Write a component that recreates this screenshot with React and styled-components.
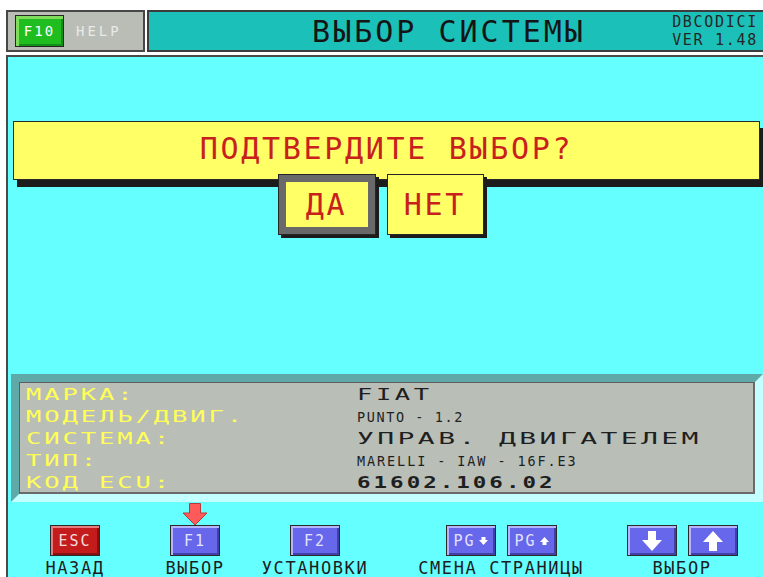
import { Fragment } from "react";
import styled, { createGlobalStyle } from "styled-components";

const GlobalStyle = createGlobalStyle`
  html, body {
    margin: 0;
    padding: 0;
    background: #ffffff;
    overflow: hidden;
  }
  body {
    font-family: "DejaVu Sans Mono", "Liberation Mono", monospace;
  }
`;

const Screen = styled.div`
  width: 763px;
  height: 577px;
  box-sizing: border-box;
  padding: 10px 0 0 6px;
  display: flex;
  flex-direction: column;
  gap: 3px;
  overflow: hidden;
`;

const TopBar = styled.div`
  display: flex;
  gap: 2px;
  height: 42px;
  flex-shrink: 0;
`;

const HelpBox = styled.div`
  width: 139px;
  box-sizing: border-box;
  border: 2px solid #474747;
  background: #b9bdb5;
  display: flex;
  align-items: center;
  gap: 12px;
  padding-left: 7px;
`;

const HelpKey = styled.div`
  width: 49px;
  height: 32px;
  box-sizing: border-box;
  border: 1px solid #262626;
  background: #1fbd1f;
  box-shadow: inset 3px 3px 0 #7fdc5c, inset -2px -2px 0 #14901a;
  color: #ffffff;
  font-size: 14px;
  letter-spacing: 2px;
  display: flex;
  align-items: center;
  justify-content: center;
`;

const HelpLabel = styled.span`
  color: #e9e9e9;
  font-size: 14px;
  letter-spacing: 3px;
`;

const TitleBox = styled.div`
  flex: 1;
  box-sizing: border-box;
  border: 2px solid #3d3d3d;
  border-right: none;
  background: #1bc1b8;
  display: grid;
  grid-template-columns: 1fr auto 1fr;
  align-items: center;
`;

const Title = styled.h1`
  grid-column: 2;
  margin: 0 14px 0 0;
  font-size: 30px;
  font-weight: 400;
  letter-spacing: 3px;
  color: #151515;
  white-space: nowrap;
`;

const Version = styled.div`
  justify-self: end;
  padding-right: 5px;
  font-size: 15px;
  line-height: 18px;
  letter-spacing: 1.7px;
  text-align: right;
  color: #262626;
`;

const Main = styled.main`
  flex: 1;
  border-top: 2px solid #4a4a4a;
  border-left: 2px solid #4a4a4a;
  background: #66ffff;
  display: flex;
  flex-direction: column;
  overflow: hidden;
`;

const Banner = styled.div`
  margin: 64px 3px 0 5px;
  height: 60px;
  box-sizing: border-box;
  border: 1px solid #2a2a2a;
  background: #ffff66;
  box-shadow: 4px 7px 0 #1c1c1c;
  display: flex;
  align-items: center;
  justify-content: center;
  padding-bottom: 4px;
  color: #c8201d;
  font-size: 30px;
  letter-spacing: 2.7px;
`;

const ChoiceRow = styled.div`
  display: flex;
  justify-content: center;
  gap: 11px;
  margin-top: -6px;
  padding-right: 10px;
`;

const ChoiceButton = styled.div`
  width: ${({ $selected }) => ($selected ? 98 : 97)}px;
  height: 61px;
  box-sizing: border-box;
  background: #ffff66;
  border: ${({ $selected }) =>
    $selected ? "8px solid #696969" : "1px solid #262626"};
  outline: 1px solid #262626;
  outline-offset: -1px;
  box-shadow: 3px 3px 0 #1c1c1c;
  display: flex;
  align-items: center;
  justify-content: center;
  color: #c8201d;
  font-size: 30px;
  letter-spacing: 2.7px;
`;

const InfoBevel = styled.section`
  margin: 139px 0 0 3px;
  height: 128px;
  box-sizing: border-box;
  border: 8px solid;
  border-color: #5fa9a9 #c4ffff #c4ffff #5fa9a9;
`;

const InfoPanel = styled.div`
  height: 100%;
  box-sizing: border-box;
  border: 1px solid #5e5e5e;
  border-right: 2px solid #6a6a6a;
  border-bottom: 2px solid #6a6a6a;
  background: #b9beb7;
  padding: 1px 0 0 6px;
  display: grid;
  grid-template-columns: 331px 1fr;
  grid-auto-rows: 22px;
  align-items: center;
`;

const WideText = styled.span`
  display: inline-block;
  white-space: nowrap;
  font-size: ${({ $size }) => $size}px;
  line-height: 22px;
  letter-spacing: ${({ $spacing }) => $spacing}px;
  font-weight: ${({ $bold }) => ($bold ? 700 : 400)};
  color: ${({ $color }) => $color};
  transform: scaleX(${({ $stretch }) => $stretch});
  transform-origin: left center;
`;

const KeyBar = styled.div`
  display: flex;
  margin-top: 23px;
  padding-left: 7px;
`;

const KeyGroup = styled.div`
  width: ${({ $width }) => $width}px;
  flex-shrink: 0;
  display: flex;
  flex-direction: column;
  align-items: center;
  gap: 4px;
`;

const KeyPair = styled.div`
  display: flex;
  gap: 11px;
`;

const KeyCap = styled.div`
  position: relative;
  width: 50px;
  height: 31px;
  box-sizing: border-box;
  border: 1px solid #2a2a2a;
  background: ${({ $tone }) => ($tone === "red" ? "#c41c1c" : "#6767ec")};
  box-shadow: ${({ $tone }) =>
    $tone === "red"
      ? "inset 2px 2px 0 #e77c7c, inset -2px -2px 0 #8a1010"
      : "inset 2px 2px 0 #b4b4ff, inset -2px -2px 0 #4040a8"};
  color: ${({ $tone }) => ($tone === "red" ? "#f6dcdc" : "#e2e2ff")};
  font-size: 15px;
  letter-spacing: 2px;
  display: flex;
  align-items: center;
  justify-content: center;
  gap: 3px;
`;

const Pointer = styled.svg`
  position: absolute;
  left: 50%;
  top: -23px;
  margin-left: -13px;
`;

const KeyLabel = styled.span`
  font-size: 17px;
  line-height: 17px;
  letter-spacing: 1.6px;
  color: #1d1d1d;
  white-space: nowrap;
`;

const BigArrow = ({ up }) => (
  <svg width="22" height="22" viewBox="0 0 22 22">
    <path
      d="M7 1H15V10H21L11 21L1 10H7Z"
      fill="#ffffff"
      transform={up ? "rotate(180 11 11)" : undefined}
    />
  </svg>
);

const SmallArrow = ({ up }) => (
  <svg width="9" height="8" viewBox="0 0 9 8">
    <path
      d="M2.5 0H6.5V3H9L4.5 8L0 3H2.5Z"
      fill="#ffffff"
      transform={up ? "rotate(180 4.5 4)" : undefined}
    />
  </svg>
);

// label style shared by every row of the vehicle summary
const labelStyle = { $size: 15, $spacing: 1.7, $stretch: 1.7 };

const info = [
  {
    label: "МАРКА:",
    value: "FIAT",
    style: { $size: 15, $spacing: 2.1, $stretch: 1.7 },
  },
  {
    label: "МОДЕЛЬ/ДВИГ.",
    value: "PUNTO - 1.2",
    style: { $size: 13.5, $spacing: 1.6, $stretch: 1 },
  },
  {
    label: "СИСТЕМА:",
    value: "УПРАВ. ДВИГАТЕЛЕМ",
    style: { $size: 16.5, $spacing: 2, $stretch: 1.7 },
  },
  {
    label: "ТИП:",
    value: "MARELLI - IAW - 16F.E3",
    style: { $size: 13.5, $spacing: 1.9, $stretch: 1 },
  },
  {
    label: "КОД ECU:",
    value: "61602.106.02",
    style: { $size: 15, $spacing: 2, $stretch: 1.5, $bold: true },
  },
];

const keyGroups = [
  { width: 120, label: "НАЗАД", keys: [{ tone: "red", text: "ESC" }] },
  {
    width: 120,
    label: "ВЫБОР",
    keys: [{ text: "F1", active: true }],
  },
  { width: 120, label: "УСТАНОВКИ", keys: [{ text: "F2" }] },
  {
    width: 252,
    label: "СМЕНА СТРАНИЦЫ",
    keys: [
      { text: "PG", icon: <SmallArrow /> },
      { text: "PG", icon: <SmallArrow up /> },
    ],
  },
  {
    width: 110,
    label: "ВЫБОР",
    keys: [{ icon: <BigArrow /> }, { icon: <BigArrow up /> }],
  },
];

const App = () => {
  return (
    <>
      <GlobalStyle />
      <Screen>
        <TopBar>
          <HelpBox>
            <HelpKey>F10</HelpKey>
            <HelpLabel>HELP</HelpLabel>
          </HelpBox>
          <TitleBox>
            <Title>ВЫБОР СИСТЕМЫ</Title>
            <Version>
              DBCODICI
              <br />
              VER 1.48
            </Version>
          </TitleBox>
        </TopBar>

        <Main>
          <Banner>ПОДТВЕРДИТЕ ВЫБОР?</Banner>
          <ChoiceRow>
            <ChoiceButton $selected>ДА</ChoiceButton>
            <ChoiceButton>НЕТ</ChoiceButton>
          </ChoiceRow>

          <InfoBevel>
            <InfoPanel>
              {info.map((row) => (
                <Fragment key={row.label}>
                  <div>
                    <WideText {...labelStyle} $color="#ffff55">
                      {row.label}
                    </WideText>
                  </div>
                  <div>
                    <WideText {...row.style} $color="#1f1f1f">
                      {row.value}
                    </WideText>
                  </div>
                </Fragment>
              ))}
            </InfoPanel>
          </InfoBevel>

          <KeyBar>
            {keyGroups.map((group, i) => (
              <KeyGroup key={i} $width={group.width}>
                <KeyPair>
                  {group.keys.map((k, j) => (
                    <KeyCap key={j} $tone={k.tone}>
                      {k.active && (
                        <Pointer width="26" height="23" viewBox="0 0 26 23">
                          <path
                            d="M7.5 0.5H18.5V10H25L13 22L1 10H7.5Z"
                            fill="#ff5a5a"
                            stroke="#b33a3a"
                          />
                        </Pointer>
                      )}
                      {k.text}
                      {k.icon}
                    </KeyCap>
                  ))}
                </KeyPair>
                <KeyLabel>{group.label}</KeyLabel>
              </KeyGroup>
            ))}
          </KeyBar>
        </Main>
      </Screen>
    </>
  );
};

export default App;
